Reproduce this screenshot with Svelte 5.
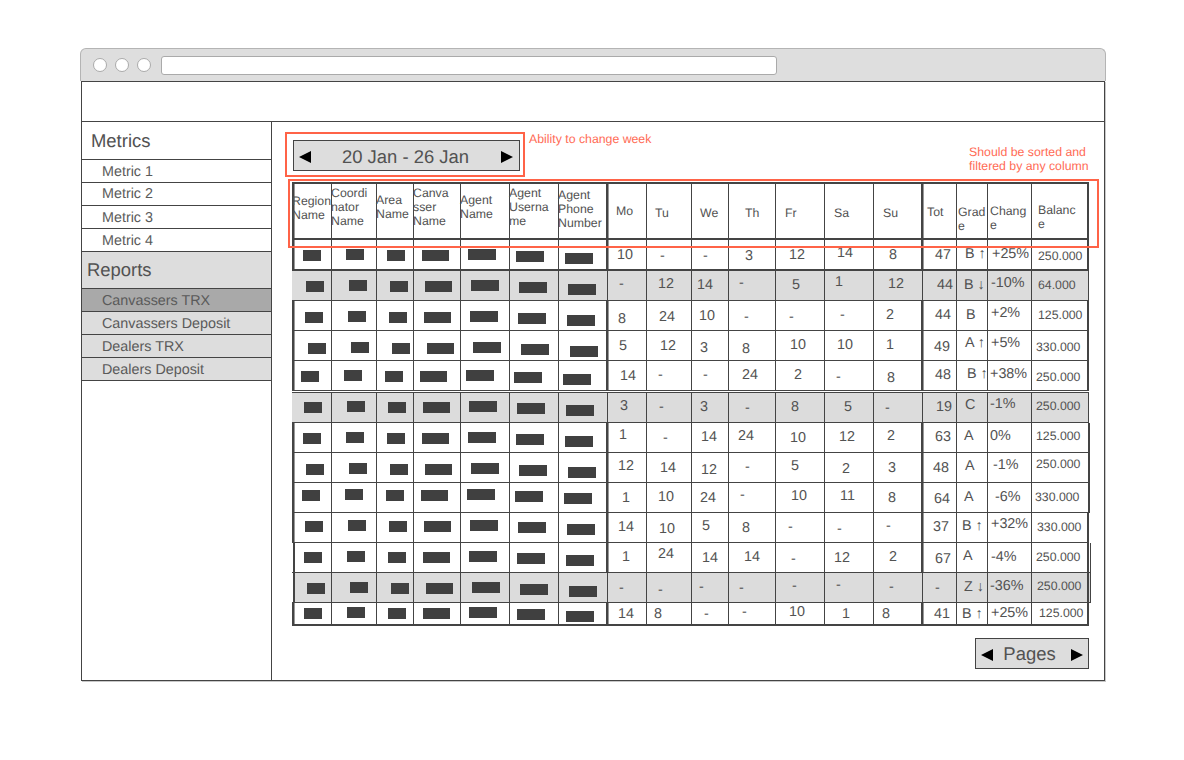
<script>
  const cols = [292,331,376,413,460,509,558,606,646,691,728,775,824,873,921,956,987,1031];
  const barW = [18,18,18,27,28,28,28];
  const barX = [11,15,11,9,8,7,7];
  const barY = [10,9,10,10,9,11,13];

  const header = [
    [['Region','Name'],292,201],
    [['Coordi','nator','Name'],331,193],
    [['Area','Name'],376,200],
    [['Canva','sser','Name'],413,193],
    [['Agent','Name'],460,200],
    [['Agent','Userna','me'],509,193],
    [['Agent','Phone','Number'],558,195],
    [['Mo'],616,211],
    [['Tu'],655,213],
    [['We'],700,213],
    [['Th'],745,213],
    [['Fr'],785,213],
    [['Sa'],834,213],
    [['Su'],883,213],
    [['Tot'],927,212],
    [['Grad','e'],958,212],
    [['Chang','e'],990,211],
    [['Balanc','e'],1038,210]
  ];

  const rows = [
    {top:240,h:31,cls:'thickb',base:240,dx:0,cells:[['10',617,255],['-',660,256],['-',703,256],['3',745,256],['12',789,255],['14',837,253],['8',889,255],['47',935,255],['B ↑',965,254],['+25%',992,254],['250.000',1038,256]]},
    {top:271,h:30,cls:'gray',base:271,dx:3,cells:[['-',619,284],['12',658,284],['14',697,285],['-',739,283],['5',792,285],['1',835,282],['12',888,284],['44',937,285],['B ↓',964,285],['-10%',991,283],['64.000',1038,285]]},
    {top:301,h:30,cls:'',base:302,dx:2,cells:[['8',618,319],['24',659,317],['10',699,316],['-',744,317],['-',789,317],['-',840,315],['2',886,315],['44',935,315],['B',966,315],['+2%',991,313],['125.000',1038,315]]},
    {top:331,h:30,cls:'',base:333,dx:5,cells:[['5',619,346],['12',660,346],['3',700,348],['8',742,349],['10',790,345],['10',837,345],['1',886,345],['49',934,347],['A ↑',965,343],['+5%',991,343],['330.000',1036,347]]},
    {top:361,h:30,cls:'',base:361,dx:-2,cells:[['14',620,376],['-',658,375],['-',703,375],['24',742,375],['2',794,375],['-',836,377],['8',887,378],['48',935,375],['B ↑',967,374],['+38%',990,374],['250.000',1036,377]]},
    {top:393,h:31,cls:'gray dbl',base:392,dx:1,cells:[['3',620,406],['-',659,407],['3',700,407],['-',745,408],['8',791,407],['5',844,407],['-',885,408],['19',936,407],['C',965,405],['-1%',990,404],['250.000',1036,406]]},
    {top:423,h:30,cls:'wide',base:423,dx:0,cells:[['1',619,435],['-',663,438],['14',701,437],['24',738,436],['10',790,438],['12',839,437],['2',887,436],['63',935,437],['A',964,436],['0%',990,436],['125.000',1036,436]]},
    {top:453,h:30,cls:'wide',base:454,dx:3,cells:[['12',618,466],['14',660,468],['12',701,470],['-',745,467],['5',791,466],['2',842,469],['3',888,468],['48',933,468],['A',965,466],['-1%',993,465],['250.000',1036,464]]},
    {top:483,h:30,cls:'wide',base:480,dx:-1,cells:[['1',622,498],['10',658,497],['24',700,498],['-',740,495],['10',791,496],['11',840,496],['8',888,498],['64',934,499],['A',964,497],['-6%',995,497],['330.000',1035,497]]},
    {top:513,h:30,cls:'',base:511,dx:2,cells:[['14',618,527],['10',659,529],['5',702,526],['8',742,528],['-',788,527],['-',837,529],['-',886,526],['37',933,527],['B ↑',962,526],['+32%',991,524],['330.000',1037,527]]},
    {top:543,h:30,cls:'shift ext',base:542,dx:1,cells:[['1',622,557],['24',658,554],['14',702,558],['14',744,557],['-',791,559],['12',834,558],['2',889,557],['67',935,559],['A',963,556],['-4%',991,557],['250.000',1036,557]]},
    {top:573,h:30,cls:'gray shift ext',base:573,dx:4,cells:[['-',619,588],['-',658,590],['-',699,587],['-',739,588],['-',792,586],['-',836,585],['-',889,587],['-',935,588],['Z ↓',964,587],['-36%',990,586],['250.000',1037,586]]},
    {top:603,h:23,cls:'thickb',base:598,dx:1,cells:[['14',618,614],['8',654,614],['-',704,614],['-',742,612],['10',789,612],['1',842,614],['8',882,614],['41',934,614],['B ↑',962,614],['+25%',991,613],['125.000',1039,613]]}
  ];

  function edge(row, i) {
    if (i === 0) {
      if (row.cls.includes('shift')) return 3;
      return row.cls.includes('gray') ? 0 : 2;
    }
    return i === 7 || i === 14 ? 2 : 1;
  }

  function cellClass(row, i) {
    if (i === 0) return 'first';
    return i === 7 || i === 14 ? 'heavy' : '';
  }
</script>

{#snippet tri(dir)}
  <svg class="tri" width="12" height="12" viewBox="0 0 12 12" aria-hidden="true">
    <polygon points={dir === 'l' ? '0,6 12,0 12,12' : '12,6 0,0 0,12'} fill="#000" />
  </svg>
{/snippet}

<div class="page">
  <div class="window">
    <div class="chrome">
      <span class="dot"></span>
      <span class="dot"></span>
      <span class="dot"></span>
      <span class="address"></span>
    </div>
    <div class="frame">
      <div class="topbar"></div>
      <div class="body">
        <aside class="side">
          <div class="title">Metrics</div>
          <div class="item">Metric 1</div>
          <div class="item up">Metric 2</div>
          <div class="item">Metric 3</div>
          <div class="item">Metric 4</div>
          <div class="title gray reports">Reports</div>
          <div class="item gray active">Canvassers TRX</div>
          <div class="item gray">Canvassers Deposit</div>
          <div class="item gray">Dealers TRX</div>
          <div class="item gray">Dealers Deposit</div>
        </aside>
        <main class="main">
          <div class="note week-note">Ability to change week</div>
          <div class="note sort-note">Should be sorted and<br />filtered by any column</div>
          <div class="mark week-mark"></div>
          <div class="mark head-mark"></div>

          <div class="week">
            {@render tri('l')}
            <span class="week-label">20 Jan - 26 Jan</span>
            {@render tri('r')}
          </div>

          <div class="table">
            <div class="row head">
              {#each header as [lines, x, cy], i}
                <div class="cell {i === 0 ? 'first' : i === 7 || i === 14 ? 'heavy' : ''}">
                  <div class="htext" style="margin-left:{x - cols[i] - (i === 0 || i === 7 || i === 14 ? 2 : 1)}px;margin-top:{cy - 7 - 184}px">
                    {#each lines as line}<div>{line}</div>{/each}
                  </div>
                </div>
              {/each}
            </div>

            {#each rows as row}
              <div class="row {row.cls}" style="height:{row.h}px">
                {#each barW as w, i}
                  <div class="cell {cellClass(row, i)}">
                    <div class="bar" style="width:{w}px;margin-left:{barX[i] + row.dx - edge(row, i)}px;margin-top:{row.base + barY[i] - row.top}px"></div>
                  </div>
                {/each}
                {#each row.cells as [text, x, cy], j}
                  {@const i = j + 7}
                  <div class="cell {cellClass(row, i)} {j === 10 ? 'last' : ''}">
                    <div class="val {j === 10 ? 'small' : ''}" style="margin-left:{x - cols[i] - edge(row, i)}px;margin-top:{cy - 8 - row.top}px">{text}</div>
                  </div>
                {/each}
              </div>
            {/each}
          </div>

          <div class="pager">
            {@render tri('l')}
            <span class="pager-label">Pages</span>
            {@render tri('r')}
          </div>
        </main>
      </div>
    </div>
  </div>
</div>

<style>
  :global(body) {
    margin: 0;
    background: #fff;
  }
  * {
    box-sizing: border-box;
  }
  .page {
    width: 1184px;
    height: 760px;
    padding: 48px 0 0 80px;
    font-family: "Liberation Sans", Arial, sans-serif;
    color: #525252;
    overflow: hidden;
    text-rendering: geometricPrecision;
  }
  .window {
    width: 1026px;
  }
  .chrome {
    display: flex;
    align-items: center;
    gap: 8px;
    height: 33px;
    padding: 0 0 0 12px;
    background: #dedede;
    border: 1px solid #b4b4b4;
    border-bottom: 0;
    border-radius: 6px 6px 0 0;
  }
  .dot {
    width: 14px;
    height: 14px;
    border-radius: 50%;
    background: #fff;
    border: 1px solid #aaa;
  }
  .address {
    width: 616px;
    height: 19px;
    margin-left: 2px;
    background: #fff;
    border: 1px solid #aaa;
    border-radius: 3px;
  }
  .frame {
    height: 600px;
    margin-left: 1px;
    width: 1024px;
    border: 1px solid #444;
    box-shadow: 1px 1px 0 #c8c8c8;
    background: #fff;
  }
  .topbar {
    height: 40px;
    border-bottom: 1px solid #444;
  }
  .body {
    display: flex;
    height: 558px;
  }
  .side {
    width: 190px;
    border-right: 1px solid #444;
    flex: none;
  }
  .title {
    height: 38px;
    padding-left: 9px;
    font-size: 18.45px;
    line-height: 37px;
    border-bottom: 1px solid #444;
  }
  .reports {
    height: 37px;
    padding-left: 5px;
    line-height: 36px;
  }
  .item {
    height: 23px;
    padding-left: 20px;
    font-size: 14.35px;
    line-height: 24px;
    border-bottom: 1px solid #444;
    color: #5a5a5a;
    overflow: hidden;
  }
  .up {
    line-height: 22px;
  }
  .gray {
    background: #dddddd;
  }
  .active {
    background: #a9a9a9;
    line-height: 25px;
  }
  .main {
    position: relative;
    flex: 1;
    padding: 18px 0 0 20px;
  }
  .note {
    position: absolute;
    font-size: 12.3px;
    line-height: 14px;
    color: #ff6b55;
  }
  .week-note {
    left: 257px;
    top: 10px;
  }
  .sort-note {
    left: 697px;
    top: 23px;
  }
  .mark {
    position: absolute;
    border: 2px solid #ff6347;
    pointer-events: none;
    z-index: 2;
  }
  .week-mark {
    left: 13px;
    top: 10px;
    width: 240px;
    height: 45px;
  }
  .head-mark {
    left: 16px;
    top: 57px;
    width: 811px;
    height: 69px;
  }
  .week,
  .pager {
    display: flex;
    align-items: center;
    background: #dddddd;
    border: 1px solid #444;
  }
  .week {
    justify-content: space-between;
    width: 227px;
    height: 31px;
    margin-left: 1px;
    padding: 0 6px 0 5px;
  }
  .week-label,
  .pager-label {
    font-size: 18.45px;
    line-height: 20px;
  }
  .week-label {
    margin: 2px 0 0 -1px;
  }
  .pager-label {
    margin-left: -5px;
  }
  .table {
    width: max-content;
    margin-top: 11px;
  }
  .row {
    display: grid;
    grid-template-columns: 39px 45px 37px 47px 49px 49px 48px 40px 45px 37px 47px 49px 49px 48px 35px 31px 44px var(--last, 58px);
    width: max-content;
    border-bottom: 1px solid #444;
  }
  .head {
    height: 58px;
    border-top: 2px solid #444;
    border-bottom: 2px solid #444;
  }
  .thickb {
    border-bottom-width: 2px;
  }
  .row.gray {
    background: #dcdcdc;
  }
  .dbl {
    margin-top: 1px;
    border-top: 1px solid #444;
  }
  .wide {
    --last: 59px;
  }
  .ext {
    padding-right: 1px;
    border-right: 1px solid #444;
  }
  .cell {
    min-width: 0;
    border-left: 1px solid #444;
  }
  .cell:last-child {
    border-right: 2px solid #444;
  }
  .first,
  .heavy {
    border-left-width: 2px;
    box-shadow: inset 1px 0 0 #9a9a9a;
  }
  .gray .first {
    border-left-width: 0;
    box-shadow: none;
  }
  .gray .heavy {
    margin-left: 1px;
    border-left-width: 1px;
    box-shadow: none;
  }
  .row.gray:not(.ext) .cell:last-child {
    border-right-width: 1px;
  }
  .shift .first,
  .row.gray.shift .first {
    margin-left: 1px;
    border-left-width: 2px;
    box-shadow: -1px 0 0 #fff;
  }
  .htext {
    font-size: 12.3px;
    line-height: 14px;
    white-space: nowrap;
  }
  .val {
    font-size: 14.35px;
    line-height: 16px;
    white-space: nowrap;
  }
  .small {
    font-size: 12.3px;
  }
  .bar {
    height: 11px;
    background: #404040;
  }
  .pager {
    justify-content: space-between;
    width: 114px;
    height: 31px;
    margin: 12px 0 0 683px;
    padding: 0 5px;
  }
  .tri {
    display: block;
    flex: none;
    margin-top: 2px;
  }
</style>
